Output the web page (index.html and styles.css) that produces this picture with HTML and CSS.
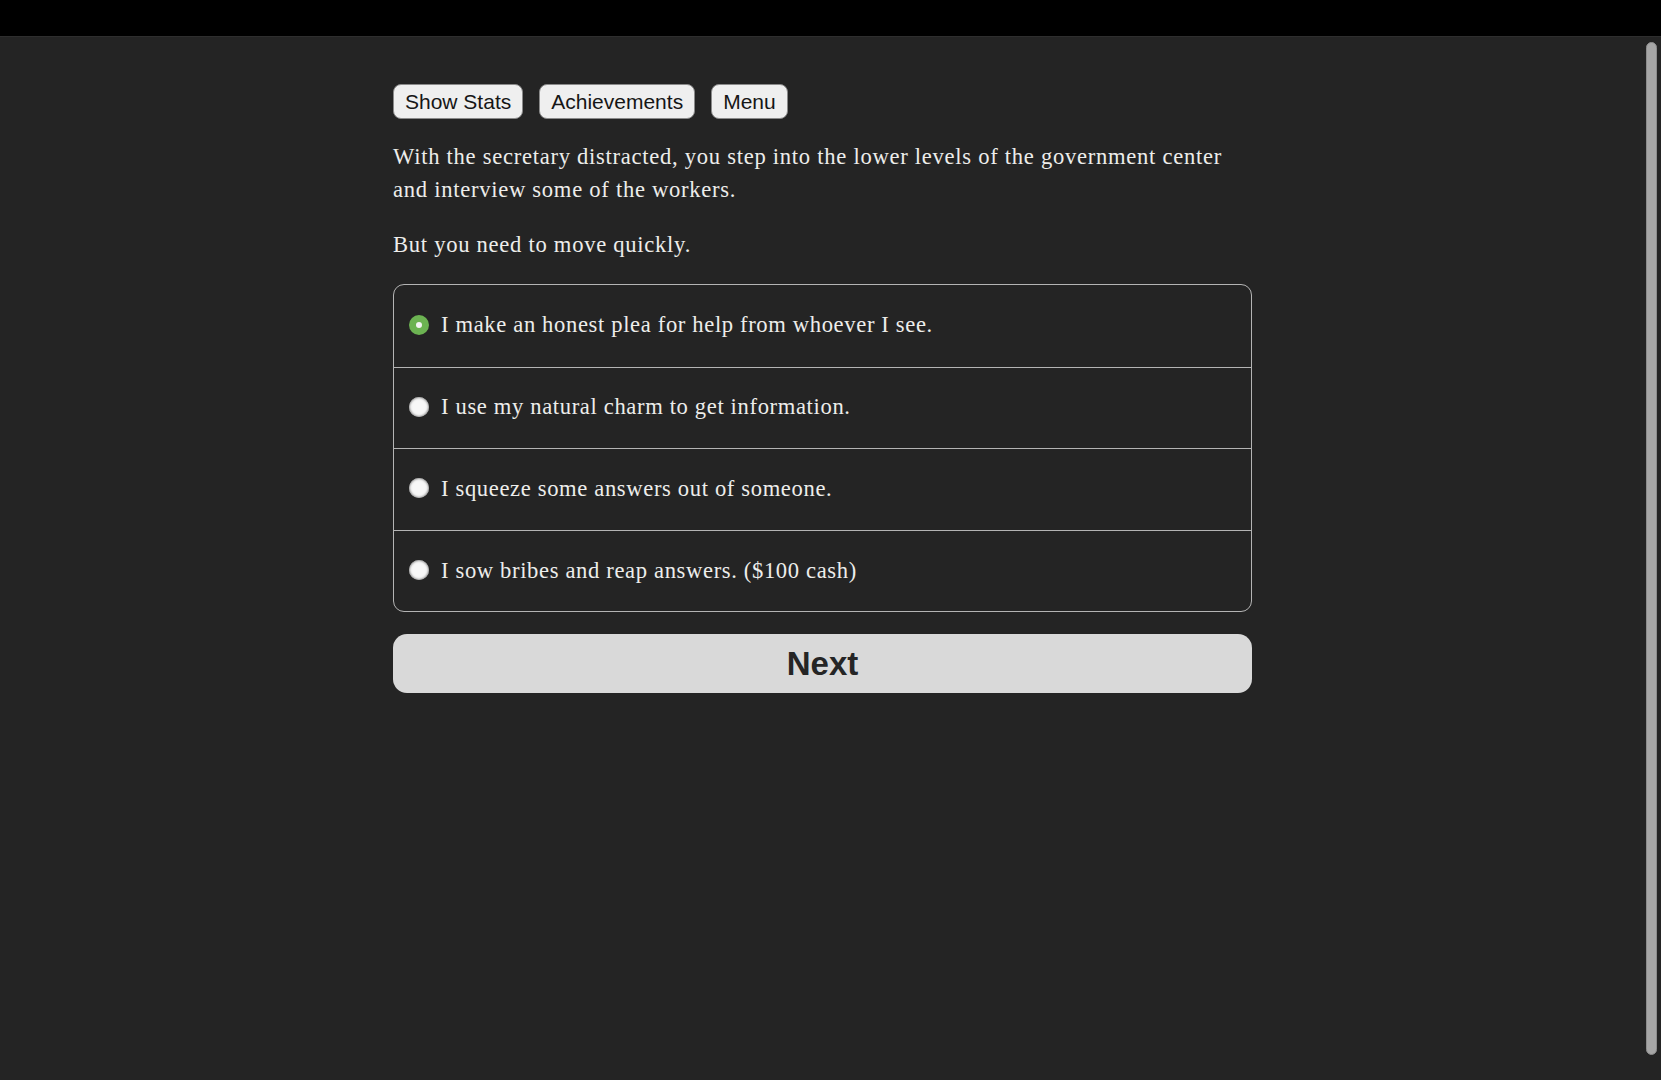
FILE: index.html
```html
<!DOCTYPE html>
<html lang="en">
<head>
<meta charset="utf-8">
<title>Choice</title>
<link rel="stylesheet" href="styles.css">
</head>
<body>
<div class="topbar"></div>
<div class="viewport">
  <main class="page">
    <div class="column">
      <nav class="toolbar">
        <button class="tool-btn" type="button">Show Stats</button>
        <button class="tool-btn" type="button">Achievements</button>
        <button class="tool-btn" type="button">Menu</button>
      </nav>
      <div class="story">
        <p>With the secretary distracted, you step into the lower levels of the government center and interview some of the workers.</p>
        <p>But you need to move quickly.</p>
      </div>
      <form class="choices">
        <label class="choice">
          <span class="radio checked"></span>
          <span class="choice-text">I make an honest plea for help from whoever I see.</span>
        </label>
        <label class="choice">
          <span class="radio"></span>
          <span class="choice-text">I use my natural charm to get information.</span>
        </label>
        <label class="choice">
          <span class="radio"></span>
          <span class="choice-text">I squeeze some answers out of someone.</span>
        </label>
        <label class="choice">
          <span class="radio"></span>
          <span class="choice-text">I sow bribes and reap answers. ($100 cash)</span>
        </label>
      </form>
      <button class="next-btn" type="button">Next</button>
    </div>
  </main>
  <div class="scrollbar"><div class="thumb"></div></div>
</div>
</body>
</html>
```
FILE: styles.css
```css
* { box-sizing: border-box; }
html, body {
  margin: 0;
  padding: 0;
  height: 100%;
  background: #242424;
  overflow: hidden;
}
body {
  display: flex;
  flex-direction: column;
  font-family: "Liberation Serif", "Times New Roman", serif;
  color: #ededeb;
}
.topbar {
  height: 37px;
  flex: none;
  background: #000;
  border-bottom: 1px solid #2e2e2e;
}
.viewport {
  flex: 1;
  display: flex;
  min-height: 0;
}
.page {
  flex: 1;
  display: flex;
  justify-content: center;
}
.column {
  width: 859px;
  padding-top: 47px;
}
.toolbar {
  display: flex;
  gap: 16px;
}
.tool-btn {
  height: 35px;
  padding: 0 11px;
  background: #efefef;
  border: 1px solid #8a8a8a;
  border-radius: 8px;
  font-family: "Liberation Sans", Arial, sans-serif;
  font-size: 21px;
  color: #161616;
  line-height: 1;
}
.story {
  margin-top: 21px;
  font-size: 22.6px;
  line-height: 33px;
  letter-spacing: 0.72px;
}
.story p {
  margin: 0 0 22px;
}
.story p:last-child { margin-bottom: 0; }
.choices {
  margin: 23px 0 0;
  border: 1px solid #b4b4b4;
  border-radius: 11px;
  overflow: hidden;
}
.choice {
  display: flex;
  align-items: center;
  height: 81.6px;
  padding: 0 15px 2px;
  font-size: 22.6px;
  line-height: 33px;
  letter-spacing: 0.64px;
}
.choice + .choice {
  border-top: 1px solid #b4b4b4;
}
.radio {
  flex: none;
  width: 20px;
  height: 20px;
  border-radius: 50%;
  background: #f7f7f7;
  box-shadow: inset 0 0 2px 1px rgba(120,120,120,0.7);
  margin-right: 12px;
  display: flex;
  align-items: center;
  justify-content: center;
}
.radio.checked {
  background: #6cb352;
  box-shadow: none;
}
.radio.checked::after {
  content: "";
  width: 6px;
  height: 6px;
  border-radius: 50%;
  background: #f4f4f4;
}
.next-btn {
  display: block;
  width: 100%;
  height: 59px;
  margin-top: 22px;
  background: #d9d9d9;
  border: none;
  border-radius: 14px;
  font-family: "Liberation Sans", Arial, sans-serif;
  font-weight: bold;
  font-size: 33px;
  color: #252525;
}
.scrollbar {
  width: 16px;
  flex: none;
  padding: 5px 4px 25px 1px;
  display: flex;
}
.thumb {
  flex: 1;
  background: #a6a6a6;
  border: 1px solid #8c8c8c;
  border-radius: 6px;
}
```
